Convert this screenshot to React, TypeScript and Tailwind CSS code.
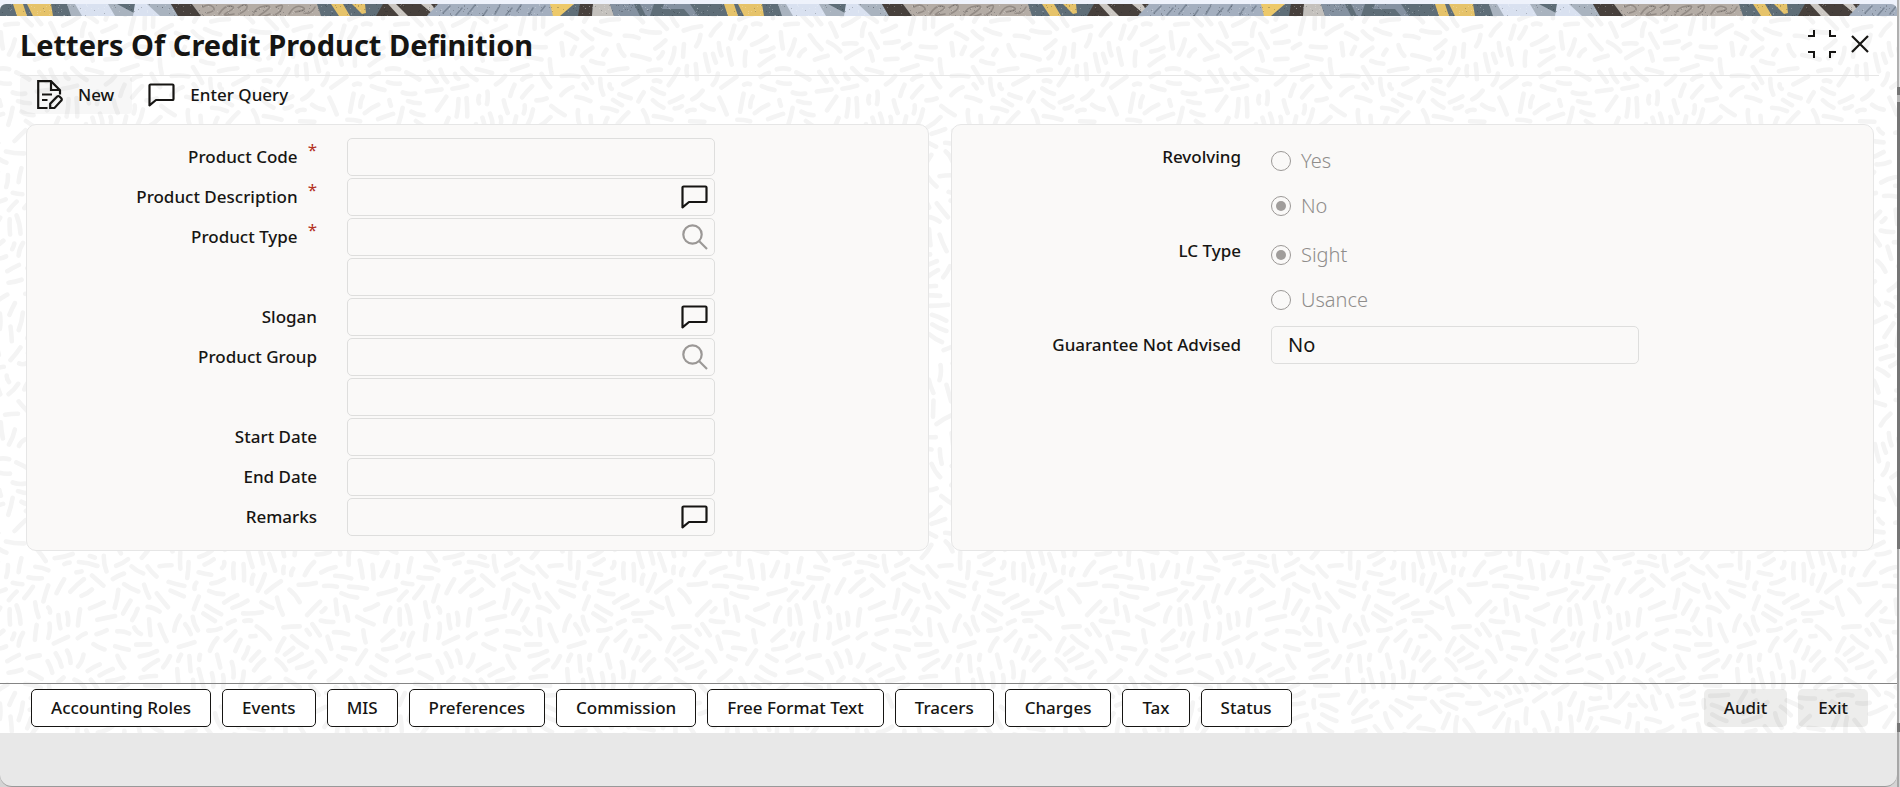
import React, { useId } from "react";

const TILE = 390;

function createRandom(seed: number) {
  let state = seed;
  return () => {
    state = (state * 1664525 + 1013904223) % 4294967296;
    return state / 4294967296;
  };
}

/* Short strokes that follow a periodic flow field, so that the tile repeats without a seam. */
function createMarks(): string {
  const random = createRandom(11);
  const points: [number, number][] = [];
  const marks: string[] = [];
  const unit = (2 * Math.PI) / TILE;
  const wrap = (v: number) => {
    const m = Math.abs(v) % TILE;
    return m > TILE / 2 ? TILE - m : m;
  };
  const tries = 16000;
  for (let i = 0; i < tries; i++) {
    const x = random() * TILE;
    const y = random() * TILE;
    const angle =
      1.7 * Math.sin(unit * (2 * x + y)) +
      1.5 * Math.cos(unit * (3 * y - x)) +
      0.7 * Math.sin(unit * (3 * x - 2 * y)) +
      0.16 * (random() - 0.5) +
      0.6;
    const half = i < tries / 3 ? 6 + random() * 3.5 : 2.5 + random() * 4;
    const dx = Math.cos(angle) * half;
    const dy = Math.sin(angle) * half;
    const own: [number, number][] = [-1, -0.5, 0, 0.5, 1].map((t) => [x + dx * t, y + dy * t]);
    const free = own.every(([a, b]) =>
      points.every(([c, d]) => {
        const u = wrap(a - c);
        const v = wrap(b - d);
        return u * u + v * v > 58;
      }),
    );
    if (!free) continue;
    points.push(...own);
    const bend = (random() - 0.5) * 4;
    const cx = (-dy / half) * bend;
    const cy = (dx / half) * bend;
    for (const ox of [-TILE, 0, TILE]) {
      for (const oy of [-TILE, 0, TILE]) {
        const px = x + ox;
        const py = y + oy;
        if (px < -14 || px > TILE + 14 || py < -14 || py > TILE + 14) continue;
        marks.push(
          `M${(px - dx).toFixed(1)} ${(py - dy).toFixed(1)}Q${(px + cx).toFixed(1)} ${(py + cy).toFixed(1)} ${(px + dx).toFixed(1)} ${(py + dy).toFixed(1)}`,
        );
      }
    }
  }
  return marks.join("");
}

const MARK_PATH = createMarks();

const speckRandom = createRandom(5);
const SPECKS = Array.from({ length: 420 }, () => ({
  x: Math.round(speckRandom() * 711),
  y: Math.round(speckRandom() * 12),
  light: speckRandom() > 0.5,
}));

const SHAPES: [string, string][] = [
  ["13,0 23,0 27,12 17,12", "#e6c36a"],
  ["27,0 51,0 53,12 33,12", "#e6c36a"],
  ["67,0 76,0 83,12 71,12", "#a9b3bf"],
  ["75,0 109,0 116,12 82,12", "#d9e1f0"],
  ["108,0 136,0 134,12 115,12", "#a9b3bf"],
  ["117,0 135,0 134,9", "#5f6e78"],
  ["135,0 151,0 161,12 133,12", "#d9e1f0"],
  ["147,0 171,0 178,12 160,12", "#a9b3bf"],
  ["171,0 192,0 201,12 178,12", "#47403c"],
  ["192,0 317,0 321,12 201,12", "#b4aca5"],
  ["331,0 343,0 350,12 339,12", "#e6c36a"],
  ["352,0 365,0 366,9 362,10", "#e6c36a"],
  ["383,0 438,0 427,12 376,12", "#47403c"],
  ["388,0 396,0 408,12 399,12", "#cbc7c2"],
  ["421,0 431,0 436,6 433,10", "#cbc7c2"],
  ["438,0 551,0 554,12 427,12", "#a4afbf"],
  ["550,0 574,0 560,12 553,12", "#edc96a"],
  ["580,0 593,0 592,12 578,12", "#47403c"],
  ["593,0 610,0 614,12 592,12", "#c4c1bd"],
  ["610,0 634,0 640,12 614,12", "#8592a1"],
  ["640,0 654,0 650,12 646,12", "#8592a1"],
  ["664,0 690,0 698,12 690,12 684,5 662,5", "#8592a1"],
];

const SQUIGGLES =
  "M203 3q6 -4 10 0t-6 6M219 10q6 -9 12 -8t-3 6 6 2M238 4q8 -6 9 -2t-8 8M253 11q2 -8 12 -9t-2 7 7 1M276 3q8 -4 6 1t-8 7M289 10q6 -10 13 -7t-7 5M304 9q7 2 11 -6";
const DASHES =
  "M450 2l-7 7M462 4l-6 7M475 1l-7 9M487 6l-4 6M500 1l-5 9M512 4l-6 7M521 1l-4 6M533 4l-4 7M545 2l-4 5";

function TopBand() {
  const id = useId();
  return (
    <svg className="block h-3 w-full" aria-hidden="true">
      <defs>
        <pattern id={id} width="711" height="12" patternUnits="userSpaceOnUse">
          <rect width="711" height="12" fill="#5f6e78" />
          {SHAPES.map(([points, fill]) => (
            <polygon key={points} points={points} fill={fill} />
          ))}
          <path d={SQUIGGLES} fill="none" stroke="#938b85" strokeWidth="1.6" strokeLinecap="round" />
          <path d={DASHES} fill="none" stroke="#7b8797" strokeWidth="1.6" strokeLinecap="round" />
          {SPECKS.map((s, i) => (
            <rect
              key={i}
              x={s.x}
              y={s.y}
              width="1"
              height="1"
              fill={s.light ? "#ffffff" : "#1f2428"}
              fillOpacity={s.light ? 0.22 : 0.25}
            />
          ))}
        </pattern>
      </defs>
      <rect width="100%" height="12" fill={`url(#${id})`} />
    </svg>
  );
}

function Texture() {
  const id = useId();
  return (
    <svg className="absolute inset-0 h-full w-full" aria-hidden="true">
      <defs>
        <pattern id={id} width={TILE} height={TILE} patternUnits="userSpaceOnUse">
          <path d={MARK_PATH} fill="none" stroke="#f4f4f4" strokeWidth="4.6" strokeLinecap="round" />
        </pattern>
      </defs>
      <rect width="100%" height="100%" fill={`url(#${id})`} />
    </svg>
  );
}

function NewIcon() {
  return (
    <svg width="26" height="30" viewBox="0 0 26 30" fill="none" stroke="currentColor" strokeWidth="2.2" aria-hidden="true">
      <path d="M10.5 28H1.2V1.2H14l9 9v4.3" />
      <path d="M14 1.5V10h8.5" />
      <path d="M5 14.5h10M5 20h5.5" />
      <path d="M13.2 28v-4.3l7-7.2a1.6 1.6 0 0 1 2.3 0l1.8 1.8a1.6 1.6 0 0 1 0 2.3L17.5 28z" />
    </svg>
  );
}

function ChatIcon() {
  return (
    <svg width="27" height="24" viewBox="0 0 27 24" fill="none" stroke="currentColor" strokeWidth="2.2" strokeLinejoin="round" aria-hidden="true">
      <path d="M1.5 22.4V2.6A1.1 1.1 0 0 1 2.6 1.5h21.8a1.1 1.1 0 0 1 1.1 1.1v13.3a1.1 1.1 0 0 1-1.1 1.1H8z" />
    </svg>
  );
}

function SearchIcon() {
  return (
    <svg width="26" height="26" viewBox="0 0 26 26" fill="none" stroke="currentColor" strokeWidth="2.2" aria-hidden="true">
      <circle cx="10.5" cy="10.5" r="9.2" />
      <path d="M17 17l8 8" />
    </svg>
  );
}

function CollapseIcon() {
  return (
    <svg width="28" height="28" viewBox="0 0 28 28" fill="none" stroke="currentColor" strokeWidth="2" aria-hidden="true">
      <path d="M0 6h6V0M28 6h-6V0M0 22h6v6M28 22h-6v6" />
    </svg>
  );
}

function CloseIcon() {
  return (
    <svg width="18" height="18" viewBox="0 0 18 18" fill="none" stroke="currentColor" strokeWidth="2.2" aria-hidden="true">
      <path d="M1 1l16 16M17 1L1 17" />
    </svg>
  );
}

type Field = { id: string; label?: string; name?: string; required?: boolean; action?: "chat" | "search" };

const FIELDS: Field[] = [
  { id: "product-code", label: "Product Code", required: true },
  { id: "product-description", label: "Product Description", required: true, action: "chat" },
  { id: "product-type", label: "Product Type", required: true, action: "search" },
  { id: "product-type-text", name: "Product Type description" },
  { id: "slogan", label: "Slogan", action: "chat" },
  { id: "product-group", label: "Product Group", action: "search" },
  { id: "product-group-text", name: "Product Group description" },
  { id: "start-date", label: "Start Date" },
  { id: "end-date", label: "End Date" },
  { id: "remarks", label: "Remarks", action: "chat" },
];

function FieldRow({ field }: { field: Field }) {
  return (
    <div className="grid grid-cols-[290fr_30fr_368fr_213fr] items-center">
      {field.label ? (
        <label htmlFor={field.id} className="flex h-[38px] items-center justify-end whitespace-nowrap">
          {field.label}
          {field.required && <span className="ml-2.5 self-start font-normal text-[#b3311f]">*</span>}
        </label>
      ) : (
        <span />
      )}
      <div className="col-start-3 flex h-[38px] items-center rounded-[5px] border border-[#dededd] pr-1.5">
        <input
          id={field.id}
          aria-label={field.name}
          readOnly
          className="h-full min-w-0 flex-1 bg-transparent px-4 text-[19px] outline-none"
        />
        {field.action === "chat" && (
          <button type="button" aria-label="Expand text" className="flex">
            <ChatIcon />
          </button>
        )}
        {field.action === "search" && (
          <button type="button" aria-label="Search" className="flex text-[#9b9896]">
            <SearchIcon />
          </button>
        )}
      </div>
    </div>
  );
}

function RadioRow({ legend, name, options, selected }: { legend: string; name: string; options: string[]; selected: string }) {
  return (
    <div role="radiogroup" aria-label={legend} className="grid grid-cols-[289fr_30fr_368fr_234fr]">
      <span className="flex h-[38px] items-center justify-end whitespace-nowrap">{legend}</span>
      <div className="col-start-3 pb-0.5">
        {options.map((option) => (
          <label key={option} className="flex h-[45px] items-center gap-2.5 text-[20px] font-light text-[#8f8d8b]">
            <input
              type="radio"
              name={name}
              disabled
              defaultChecked={option === selected}
              className="grid size-5 appearance-none place-content-center rounded-full border border-[#9b9896] checked:before:size-2.5 checked:before:rounded-full checked:before:bg-[#a09d9b] checked:before:content-['']"
            />
            {option}
          </label>
        ))}
      </div>
    </div>
  );
}

const TABS = [
  "Accounting Roles",
  "Events",
  "MIS",
  "Preferences",
  "Commission",
  "Free Format Text",
  "Tracers",
  "Charges",
  "Tax",
  "Status",
];

export default function App() {
  return (
    <div className="flex min-h-screen bg-[#d4d4d4] font-['Noto_Sans','Open_Sans',sans-serif] text-[17px] leading-6 font-medium text-[#161513]">
      <div className="flex min-w-0 flex-1 flex-col bg-linear-to-b from-[#eef2fb] from-50% to-[#d4d4d4] to-50% pt-1">
        <div className="flex flex-1 flex-col overflow-hidden rounded-t-md rounded-b-xl border-b border-[#999999] bg-[#e8e8e8]">
          <TopBand />
          <main className="relative flex flex-1 flex-col bg-white">
            <Texture />
            <div className="relative flex flex-1 flex-col">
              <header className="mr-[18px] ml-5 flex h-[60px] items-center justify-between border-b border-[#e6e6e6] pr-2.5 pb-0.5">
                <h1 className="text-[29px] leading-9 font-bold">Letters Of Credit Product Definition</h1>
                <div className="flex items-center gap-[15px] pb-0.5">
                  <button type="button" aria-label="Collapse">
                    <CollapseIcon />
                  </button>
                  <button type="button" aria-label="Close">
                    <CloseIcon />
                  </button>
                </div>
              </header>

              <div className="mb-2.5 ml-5 flex h-[38px]">
                <button type="button" className="flex items-center gap-[15px] rounded bg-black/3 pr-[18px] pl-[17px]">
                  <NewIcon />
                  New
                </button>
                <button type="button" className="flex items-center gap-[15px] px-4">
                  <ChatIcon />
                  Enter Query
                </button>
              </div>

              <form className="mr-[23px] ml-[26px] grid grid-cols-[903fr_923fr] gap-[22px]">
                <section className="flex flex-col gap-0.5 rounded-[10px] border border-[#e6e6e6] bg-[#faf9f8] pt-[13px] pb-3.5">
                  {FIELDS.map((field) => (
                    <FieldRow key={field.id} field={field} />
                  ))}
                </section>
                <section className="flex flex-col gap-0.5 rounded-[10px] border border-[#e6e6e6] bg-[#faf9f8] pt-[13px] pb-3.5">
                  <RadioRow legend="Revolving" name="revolving" options={["Yes", "No"]} selected="No" />
                  <RadioRow legend="LC Type" name="lc-type" options={["Sight", "Usance"]} selected="Sight" />
                  <div className="grid grid-cols-[289fr_30fr_368fr_234fr] items-center">
                    <label htmlFor="guarantee" className="text-right whitespace-nowrap">
                      Guarantee Not Advised
                    </label>
                    <select
                      id="guarantee"
                      defaultValue="No"
                      className="col-start-3 h-[38px] appearance-none rounded-[5px] border border-[#dededd] bg-transparent px-4 text-[20px] font-normal"
                    >
                      <option>No</option>
                      <option>Yes</option>
                    </select>
                  </div>
                </section>
              </form>

              <footer className="mt-auto flex items-center justify-between border-t border-[#858585] pt-[5px] pr-[29px] pb-1.5 pl-[31px]">
                <nav className="flex gap-[11px]">
                  {TABS.map((tab) => (
                    <button
                      key={tab}
                      type="button"
                      className="h-[38px] rounded-[5px] border border-[#161513] bg-white px-[19px] whitespace-nowrap"
                    >
                      {tab}
                    </button>
                  ))}
                </nav>
                <div className="flex gap-[11px]">
                  <button type="button" className="h-[38px] rounded-[5px] bg-[#161513]/8 px-5">
                    Audit
                  </button>
                  <button type="button" className="h-[38px] rounded-[5px] bg-[#161513]/8 px-5">
                    Exit
                  </button>
                </div>
              </footer>
            </div>
          </main>
          <div className="h-[53px]" />
        </div>
      </div>
      <div className="flex w-[3px] flex-col" aria-hidden="true">
        <div className="grow-87 border-l-2 border-[#b0b0b0] bg-[#e4e4e4]" />
        <div className="grow-8 bg-[#757575]" />
        <div className="grow-7 bg-[#b8b8b8]" />
        <div className="grow-447 bg-[#757575]" />
        <div className="grow-174 border-l-2 border-[#a6a6a6] bg-[#e4e4e4]" />
        <div className="grow-9 bg-[#757575]" />
        <div className="grow-55 border-l-2 border-[#a6a6a6] bg-[#d4d4d4]" />
      </div>
    </div>
  );
}
